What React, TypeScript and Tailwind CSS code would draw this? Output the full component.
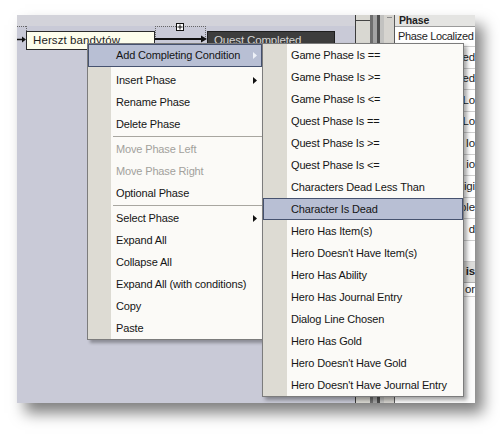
import React from 'react';

type Item = { label?: string; disabled?: boolean; arrow?: boolean; active?: boolean; sep?: boolean };

const mainItems: Item[] = [
  { label: 'Insert Phase', arrow: true },
  { label: 'Rename Phase' },
  { label: 'Delete Phase' },
  { sep: true },
  { label: 'Move Phase Left', disabled: true },
  { label: 'Move Phase Right', disabled: true },
  { label: 'Optional Phase' },
  { sep: true },
  { label: 'Select Phase', arrow: true },
  { label: 'Expand All' },
  { label: 'Collapse All' },
  { label: 'Expand All (with conditions)' },
  { label: 'Copy' },
  { label: 'Paste' },
];

const subItems: Item[] = [
  { label: 'Game Phase Is ==' },
  { label: 'Game Phase Is >=' },
  { label: 'Game Phase Is <=' },
  { label: 'Quest Phase Is ==' },
  { label: 'Quest Phase Is >=' },
  { label: 'Quest Phase Is <=' },
  { label: 'Characters Dead Less Than' },
  { label: 'Character Is Dead', active: true },
  { label: 'Hero Has Item(s)' },
  { label: "Hero Doesn't Have Item(s)" },
  { label: 'Hero Has Ability' },
  { label: 'Hero Has Journal Entry' },
  { label: 'Dialog Line Chosen' },
  { label: 'Hero Has Gold' },
  { label: "Hero Doesn't Have Gold" },
  { label: "Hero Doesn't Have Journal Entry" },
];

// visible tails of the property grid values (rest is under the submenu)
const gridRows = ['Localized', 'Localized', 'Journal Lo', 'Journal Lo', 'Io', 'io', 'igi', 'ple', 'd', ''];

function Arrow({ light }: { light?: boolean }) {
  return (
    <svg width="4" height="7" viewBox="0 0 4 7" className="shrink-0">
      <path d="M0 0L4 3.5L0 7Z" fill={light ? '#eef1f8' : '#111'} />
    </svg>
  );
}

function MenuRow({ item }: { item: Item }) {
  if (item.sep) {
    return (
      <div className="flex h-[3px] items-center pl-[25px]">
        <div className="h-px flex-1 bg-[#a8a6a0]" />
      </div>
    );
  }
  if (item.active) {
    return (
      <div className="flex h-[22px] items-center border border-[#46526f] bg-[#b8bfd4] pl-[27px] pr-[4px]">
        <span className="flex-1 text-[#151515]">{item.label}</span>
        {item.arrow && <Arrow light />}
      </div>
    );
  }
  return (
    <div className="flex h-[22px] items-center pl-[28px] pr-[5px]">
      <span className={item.disabled ? 'flex-1 text-[#a2a19c]' : 'flex-1 text-[#151515]'}>{item.label}</span>
      {item.arrow && <Arrow />}
    </div>
  );
}

export default function App() {
  return (
    <div className="h-[440px] w-[500px] overflow-hidden bg-white pl-[17px] pt-[15px] font-['Liberation_Sans',Arial,sans-serif] text-[11px] tracking-[-0.15px]">
      <div className="relative flex h-[388px] w-[458px] shadow-[8px_10px_14px_rgba(0,0,0,0.5)]">
        {/* diagram canvas */}
        <div className="relative flex w-[338px] flex-col overflow-hidden bg-[#c9cad7]">
          <div className="h-[11px] bg-[#d3d3da]" />
          <div className="flex-1" />

          <div className="absolute left-0 top-[11px] w-[9px] border-t border-dotted border-[#666]" />
          <div className="absolute left-[9px] top-[11px] h-[5px] border-l border-dotted border-[#666]" />

          <svg className="absolute left-0 top-[21px]" width="10" height="7" viewBox="0 0 10 7">
            <path d="M0 3.5H6" stroke="#111" strokeWidth="1.5" />
            <path d="M5 0.5L9 3.5L5 6.5Z" fill="#111" />
          </svg>

          <div className="absolute left-[9px] top-[16px] flex h-[19px] w-[129px] items-center border border-[#2a2a2a] bg-[#fdfdec] pl-[6px] text-[11.5px] tracking-[0.1px] text-[#222]">
            Herszt bandytów
          </div>

          <div className="absolute left-[138px] top-[11px] h-[13px] w-[51px] border border-dotted border-[#666]" />
          <div className="absolute left-[159px] top-[8px] flex h-[8px] w-[8px] items-center justify-center border border-[#111] bg-white">
            <svg width="6" height="6" viewBox="0 0 6 6">
              <path d="M3 0.5V5.5M0.5 3H5.5" stroke="#111" strokeWidth="1" />
            </svg>
          </div>
          <svg className="absolute left-[138px] top-[20px]" width="54" height="8" viewBox="0 0 54 8">
            <path d="M0 4H48" stroke="#111" strokeWidth="2" />
            <path d="M46 0.5L52 4L46 7.5Z" fill="#111" />
          </svg>

          <div className="absolute left-[190px] top-[16px] flex h-[19px] w-[128px] items-center border border-[#1e1e1e] bg-[#3d3d3d] pl-[6px] text-[11.5px] text-[#d4d4d4]">
            Quest Completed
          </div>
        </div>

        {/* splitter / scroll strips */}
        <div className="flex w-[40px]">
          <div className="w-px bg-[#3c3c3c]" />
          <div className="flex w-[14px] flex-col bg-[#d9d8d2]">
            <div className="h-[5px]" />
            <div className="h-px bg-[#444]" />
          </div>
          <div className="w-[3px] bg-[#6e6e6e]" />
          <div className="w-[4px] bg-[#a3a3a3]" />
          <div className="w-[3px] bg-[#4e4e4e]" />
          <div className="w-[4px] bg-[#c2c2c0]" />
          <div className="flex w-[10px] justify-center bg-[#d6d4cf] pt-[2px]">
            <div className="h-px w-[5px] bg-[#8a8a8a]" />
          </div>
          <div className="w-px bg-[#5a5a5a]" />
        </div>

        {/* property grid */}
        <div className="flex w-[80px] flex-col overflow-hidden bg-white text-[11.5px] text-[#1e1e1e]">
          <div className="flex h-[12px] items-center border-b border-[#9a9a9a] bg-[#e4e4e2] pl-[4px] text-[10.5px] font-bold leading-[11px]">
            Phase
          </div>
          <div className="flex h-[20px] items-center overflow-hidden whitespace-nowrap border-b border-[#cfcfcf] pl-[3px] text-[11px] tracking-[-0.35px]">
            Phase Localized
          </div>
          {gridRows.map((t, i) => (
            <div key={i} className="flex h-[21.5px] items-center justify-end overflow-hidden whitespace-nowrap border-b border-[#cfcfcf] text-[#1e1e1e]">
              {t}
            </div>
          ))}
          <div className="flex h-[21px] items-center justify-end overflow-hidden border-b border-[#b0b0b0] bg-[#dcdcda] font-bold">
            is
          </div>
          <div className="flex h-[14px] items-center justify-end overflow-hidden border-b border-[#cfcfcf]">or</div>
          <div className="flex-1 bg-[#fbfbfb]" />
        </div>

        {/* context menu */}
        <div className="absolute left-[70px] top-[28px] w-[176px] border border-[#7c7c7c] bg-[linear-gradient(to_right,#dddbd3_0px,#dddbd3_23px,#fbfaf7_23px)] shadow-[3px_3px_3px_rgba(0,0,0,0.3)]">
          <div className="flex h-[23px] items-center border border-[#46526f] bg-[#b8bfd4] pl-[27px] pr-[4px]">
            <span className="flex-1 text-[#151515]">Add Completing Condition</span>
            <Arrow light />
          </div>
          <div className="h-[2px]" />
          {mainItems.map((it, i) => (
            <MenuRow key={i} item={it} />
          ))}
        </div>

        {/* submenu */}
        <div className="absolute left-[245px] top-[28px] w-[202px] border border-[#7c7c7c] bg-[linear-gradient(to_right,#dddbd3_0px,#dddbd3_24px,#fbfaf7_24px)] shadow-[3px_3px_4px_rgba(0,0,0,0.35)]">
          {subItems.map((it, i) => (
            <MenuRow key={i} item={it} />
          ))}
        </div>
      </div>
    </div>
  );
}
